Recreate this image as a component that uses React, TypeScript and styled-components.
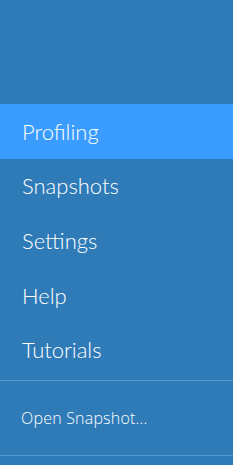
import React, { useState } from 'react';
import styled, { createGlobalStyle } from 'styled-components';

const GlobalStyle = createGlobalStyle`
  html, body {
    margin: 0;
    padding: 0;
    background: #2f7bb8;
  }
  body {
    font-family: 'Lato', 'Open Sans', sans-serif;
  }
`;

const Sidebar = styled.nav`
  width: 233px;
  height: 465px;
  background: #2f7bb8;
  display: flex;
  flex-direction: column;
  padding-top: 104px;
  box-sizing: border-box;
`;

const MainList = styled.ul`
  list-style: none;
  margin: 0;
  padding: 0 0 3px 0;
  border-bottom: 1px solid #5597cc;
`;

const NavItem = styled.li<{ $active: boolean }>`
  height: 54.6px;
  display: flex;
  align-items: center;
  padding-left: 22px;
  font-size: 22px;
  font-weight: 300;
  color: #ffffff;
  background: ${props => props.$active ? '#3a9cfe' : 'transparent'};
  cursor: pointer;
`;

const ActionList = styled.ul`
  list-style: none;
  margin: 0;
  padding: 0;
  border-bottom: 1px solid #5597cc;
`;

const ActionItem = styled.li`
  height: 74px;
  display: flex;
  align-items: center;
  padding-left: 21px;
  font-family: 'Open Sans', sans-serif;
  font-size: 16px;
  font-weight: 300;
  letter-spacing: 0.2px;
  color: #ffffff;
  cursor: pointer;
`;

const items = ['Profiling', 'Snapshots', 'Settings', 'Help', 'Tutorials'];

const App: React.FC = () => {
  const [active, setActive] = useState('Profiling');

  return (
    <>
      <GlobalStyle />
      <Sidebar>
        <MainList>
          {items.map(item => (
            <NavItem key={item} $active={item === active} onClick={() => setActive(item)}>
              {item}
            </NavItem>
          ))}
        </MainList>
        <ActionList>
          <ActionItem>Open Snapshot...</ActionItem>
        </ActionList>
      </Sidebar>
    </>
  );
};

export default App;
